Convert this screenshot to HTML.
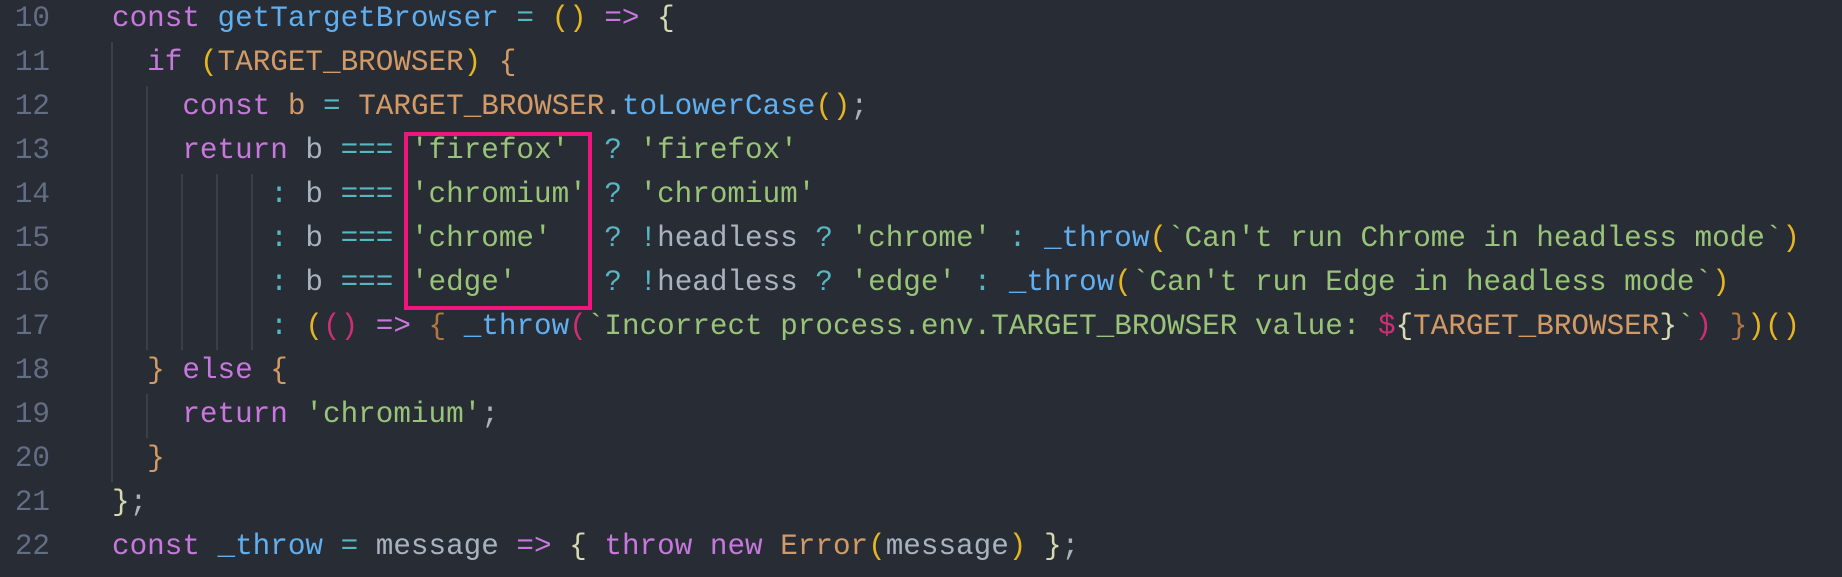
<!DOCTYPE html>
<html><head><meta charset="utf-8"><style>
html,body{margin:0;padding:0;background:#282c34;width:1842px;height:577px;overflow:hidden}
.l{position:absolute;left:0;height:44px;line-height:44px;font-family:"Liberation Mono",monospace;font-size:29.3px;white-space:pre;color:#abb2bf}
.n{position:absolute;left:0;width:50px;text-align:right;color:#636d83}
.c{position:absolute;left:112px}
.k{color:#c678dd}.f{color:#61afef}.s{color:#98c379}.o{color:#56b6c2}.v{color:#abb2bf}.t{color:#d19a66}
.y{color:#e5b522}.p{color:#d7dab0}.m{color:#cf2e76}.b{color:#b0773e}
.g{position:absolute;width:2px;background:#3a3f4a}
.box{position:absolute;left:404px;top:132px;width:180px;height:170px;border:4px solid #f0147f}
</style></head><body>
<div class="g" style="left:111px;top:42px;height:440px"></div>
<div class="g" style="left:146px;top:86px;height:264px"></div>
<div class="g" style="left:146px;top:394px;height:44px"></div>
<div class="g" style="left:181px;top:174px;height:176px"></div>
<div class="g" style="left:216px;top:174px;height:176px"></div>
<div class="g" style="left:251px;top:174px;height:176px"></div>

<div class="l" style="top:-3px"><span class="n">10</span><span class="c"><span class="k">const</span> <span class="f">getTargetBrowser</span> <span class="o">=</span> <span class="y">()</span> <span class="k">=&gt;</span> <span class="p">{</span></span></div>
<div class="l" style="top:41px"><span class="n">11</span><span class="c">  <span class="k">if</span> <span class="y">(</span><span class="t">TARGET_BROWSER</span><span class="y">)</span> <span class="t">{</span></span></div>
<div class="l" style="top:85px"><span class="n">12</span><span class="c">    <span class="k">const</span> <span class="t">b</span> <span class="o">=</span> <span class="t">TARGET_BROWSER</span>.<span class="f">toLowerCase</span><span class="y">()</span>;</span></div>
<div class="l" style="top:129px"><span class="n">13</span><span class="c">    <span class="k">return</span> b <span class="o">===</span> <span class="s">'firefox'</span>  <span class="o">?</span> <span class="s">'firefox'</span></span></div>
<div class="l" style="top:173px"><span class="n">14</span><span class="c">         <span class="o">:</span> b <span class="o">===</span> <span class="s">'chromium'</span> <span class="o">?</span> <span class="s">'chromium'</span></span></div>
<div class="l" style="top:217px"><span class="n">15</span><span class="c">         <span class="o">:</span> b <span class="o">===</span> <span class="s">'chrome'</span>   <span class="o">?</span> <span class="o">!</span>headless <span class="o">?</span> <span class="s">'chrome'</span> <span class="o">:</span> <span class="f">_throw</span><span class="y">(</span><span class="s">`Can't run Chrome in headless mode`</span><span class="y">)</span></span></div>
<div class="l" style="top:261px"><span class="n">16</span><span class="c">         <span class="o">:</span> b <span class="o">===</span> <span class="s">'edge'</span>     <span class="o">?</span> <span class="o">!</span>headless <span class="o">?</span> <span class="s">'edge'</span> <span class="o">:</span> <span class="f">_throw</span><span class="y">(</span><span class="s">`Can't run Edge in headless mode`</span><span class="y">)</span></span></div>
<div class="l" style="top:305px"><span class="n">17</span><span class="c">         <span class="o">:</span> <span class="y">(</span><span class="m">()</span> <span class="k">=&gt;</span> <span class="b">{</span> <span class="f">_throw</span><span class="m">(</span><span class="s">`Incorrect process.env.TARGET_BROWSER value: </span><span class="m">$</span><span class="p">{</span><span class="t">TARGET_BROWSER</span><span class="p">}</span><span class="s">`</span><span class="m">)</span> <span class="b">}</span><span class="y">)()</span></span></div>
<div class="l" style="top:349px"><span class="n">18</span><span class="c">  <span class="t">}</span> <span class="k">else</span> <span class="t">{</span></span></div>
<div class="l" style="top:393px"><span class="n">19</span><span class="c">    <span class="k">return</span> <span class="s">'chromium'</span>;</span></div>
<div class="l" style="top:437px"><span class="n">20</span><span class="c">  <span class="t">}</span></span></div>
<div class="l" style="top:481px"><span class="n">21</span><span class="c"><span class="p">}</span>;</span></div>
<div class="l" style="top:525px"><span class="n">22</span><span class="c"><span class="k">const</span> <span class="f">_throw</span> <span class="o">=</span> message <span class="k">=&gt;</span> <span class="p">{</span> <span class="k">throw</span> <span class="k">new</span> <span class="t">Error</span><span class="y">(</span>message<span class="y">)</span> <span class="p">}</span>;</span></div>
<div class="box"></div>
</body></html>
